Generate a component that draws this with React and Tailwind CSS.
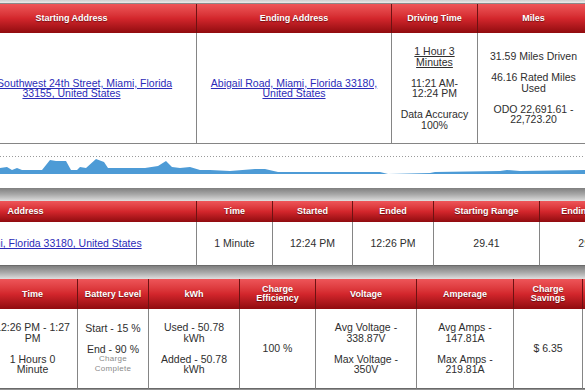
import React from 'react';

const head =
  'flex items-center justify-center border-r border-[#6e1212] bg-linear-to-b from-[#ee5559] via-[#d3262c] to-[#900b0f] px-1 text-center text-[9px] font-bold leading-[9px] text-white [text-shadow:0_1px_1px_rgba(0,0,0,0.45)]';
const cell =
  'flex flex-col items-center justify-center gap-[10.5px] border-r border-[#858585] bg-white px-[5px] text-center text-[10.5px] leading-[10.5px] text-[#2e2e2e]';
const link = 'text-[#2b2bb8] underline';

function Band({ h }) {
  return <div className={`${h} w-full bg-linear-to-b from-[#7f7f7f] via-[#a9a9a9] to-[#dedede]`} />;
}

function Chart() {
  const pts = [
    [0, 24], [7, 23], [12, 26], [17, 24], [22, 26], [42, 26], [50, 16], [56, 17], [66, 17],
    [71, 26], [77, 26], [80, 23], [86, 24], [96, 15], [104, 18], [108, 24], [145, 24],
    [158, 22], [166, 17], [172, 23], [180, 24], [190, 23], [200, 26], [210, 26], [230, 27],
    [255, 25], [265, 25], [278, 28], [380, 28], [388, 30], [430, 29], [435, 28], [500, 27],
    [507, 26], [520, 27], [585, 26],
  ];
  const d = `M0,30 ${pts.map(([x, y]) => `L${x},${y}`).join(' ')} L585,30 Z`;
  return (
    <svg width="585" height="44" viewBox="0 0 585 44" className="block">
      <line x1="0" y1="12.5" x2="585" y2="12.5" stroke="#9a9a9a" strokeWidth="1" strokeDasharray="1 2" />
      <path d={d} fill="#4d9bd6" />
    </svg>
  );
}

export default function App() {
  return (
    <div className="h-[390px] w-[585px] overflow-hidden bg-white font-['Liberation_Sans',Arial,sans-serif]">
      <div className="h-[3px] w-full bg-linear-to-b from-[#cfcfcf] to-[#ececec]" />

      {/* trip */}
      <div className="ml-[-53px] grid w-max grid-cols-[250px_195px_86px_112px] grid-rows-[29px_111px] border-t border-[#8a8a8a]">
        <div className={head}>Starting Address</div>
        <div className={head}>Ending Address</div>
        <div className={head}>Driving Time</div>
        <div className={head}>Miles</div>

        <div className={`${cell} border-b px-[8px]`}>
          <a className={link}>7400 Southwest 24th Street, Miami, Florida 33155, United States</a>
        </div>
        <div className={`${cell} border-b px-[8px]`}>
          <a className={link}>Abigail Road, Miami, Florida 33180, United States</a>
        </div>
        <div className={`${cell} border-b px-[8px]`}>
          <a className="underline">1 Hour 3 Minutes</a>
          <p>11:21 AM-12:24 PM</p>
          <p>Data Accuracy 100%</p>
        </div>
        <div className={`${cell} border-b px-[8px]`}>
          <p>31.59 Miles Driven</p>
          <p>46.16 Rated Miles Used</p>
          <p>ODO 22,691.61 - 22,723.20</p>
        </div>
      </div>

      <Chart />
      <Band h="h-[13px]" />

      {/* stop */}
      <div className="ml-[-145px] grid w-max grid-cols-[342px_76px_80px_81px_106px_104px] grid-rows-[21px_44px]">
        <div className={head}>Address</div>
        <div className={head}>Time</div>
        <div className={head}>Started</div>
        <div className={head}>Ended</div>
        <div className={head}>Starting Range</div>
        <div className={head}>Ending Range</div>

        <div className={`${cell} border-b border-b-[#6a6a6a]`}>
          <a className={link}>Abigail Road, Miami, Florida 33180, United States</a>
        </div>
        <div className={`${cell} border-b border-b-[#6a6a6a]`}>1 Minute</div>
        <div className={`${cell} border-b border-b-[#6a6a6a]`}>12:24 PM</div>
        <div className={`${cell} border-b border-b-[#6a6a6a]`}>12:26 PM</div>
        <div className={`${cell} border-b border-b-[#6a6a6a]`}>29.41</div>
        <div className={`${cell} border-b border-b-[#6a6a6a]`}>29.38</div>
      </div>

      <Band h="h-[13px]" />

      {/* charge */}
      <div className="ml-[-12px] grid w-max grid-cols-[90px_71px_91px_76px_101px_97px_69px_80px] grid-rows-[30px_80px]">
        <div className={head}>Time</div>
        <div className={head}>Battery Level</div>
        <div className={head}>kWh</div>
        <div className={head}>Charge Efficiency</div>
        <div className={head}>Voltage</div>
        <div className={head}>Amperage</div>
        <div className={head}>Charge Savings</div>
        <div className={head}>Rating</div>

        <div className={`${cell} border-b border-b-[#6a6a6a]`}>
          <p>12:26 PM - 1:27 PM</p>
          <p>1 Hours 0 Minute</p>
        </div>
        <div className={`${cell} border-b border-b-[#6a6a6a]`}>
          <p>Start - 15 %</p>
          <div>
            <p>End - 90 %</p>
            <p className="text-[8px] leading-[10px] tracking-[0.3px] text-[#8a8a8a]">Charge Complete</p>
          </div>
        </div>
        <div className={`${cell} border-b border-b-[#6a6a6a]`}>
          <p>Used - 50.78 kWh</p>
          <p>Added - 50.78 kWh</p>
        </div>
        <div className={`${cell} border-b border-b-[#6a6a6a]`}>100 %</div>
        <div className={`${cell} border-b border-b-[#6a6a6a]`}>
          <p>Avg Voltage - 338.87V</p>
          <p>Max Voltage - 350V</p>
        </div>
        <div className={`${cell} border-b border-b-[#6a6a6a]`}>
          <p>Avg Amps - 147.81A</p>
          <p>Max Amps - 219.81A</p>
        </div>
        <div className={`${cell} border-b border-b-[#6a6a6a]`}>$ 6.35</div>
        <div className={`${cell} border-b border-b-[#6a6a6a]`}></div>
      </div>

      <div className="h-[4px] w-full bg-linear-to-b from-[#8a8a8a] to-[#cfcfcf]" />
    </div>
  );
}
